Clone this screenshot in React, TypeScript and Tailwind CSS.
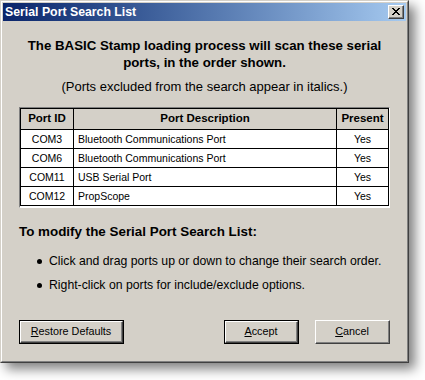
import React from "react";

const rows = [
  { id: "COM3", desc: "Bluetooth Communications Port", present: "Yes" },
  { id: "COM6", desc: "Bluetooth Communications Port", present: "Yes" },
  { id: "COM11", desc: "USB Serial Port", present: "Yes" },
  { id: "COM12", desc: "PropScope", present: "Yes" },
];

function Btn({ children, isDefault }: { children: React.ReactNode; isDefault?: boolean }) {
  return (
    <div className={isDefault ? "h-[24px] border border-black flex" : "h-[24px] flex"}>
      <div className="flex-1 flex border border-t-white border-l-white border-b-[#404040] border-r-[#404040]">
        <div className="flex-1 flex items-center justify-center border-b border-r border-b-[#808080] border-r-[#808080] text-[10.8px] text-black">
          {children}
        </div>
      </div>
    </div>
  );
}

export default function App() {
  return (
    <div
      className="w-[425px] h-[380px] bg-white overflow-hidden"
      style={{ fontFamily: '"Liberation Sans", Arial, sans-serif' }}
    >
      <div className="w-[409px] h-[363px] flex flex-col border border-t-[#d4d0c8] border-l-[#d4d0c8] border-b-[#404040] border-r-[#404040] bg-[#d4d0c8] shadow-[6px_6px_11px_rgba(0,0,0,0.5)]">
        <div className="flex-1 flex flex-col border border-t-white border-l-white border-b-[#808080] border-r-[#808080] p-px">
          {/* Title bar */}
          <div className="h-[18px] flex items-center justify-between bg-linear-to-r from-[#0a246a] to-[#a6caf0] pl-[2px] pr-[2px]">
            <span className="text-white font-bold text-[12.3px] leading-none">
              Serial Port Search List
            </span>
            <div className="w-[16px] h-[14px] flex border border-t-white border-l-white border-b-[#404040] border-r-[#404040] bg-[#d4d0c8]">
              <div className="flex-1 flex items-center justify-center border-b border-r border-b-[#808080] border-r-[#808080]">
                <svg width="8" height="7" viewBox="0 0 8 7" shapeRendering="crispEdges">
                  <path d="M0 0h2v1h-2zM6 0h2v1h-2zM1 1h2v1h-2zM5 1h2v1h-2zM2 2h4v1h-4zM3 3h2v1h-2zM2 4h4v1h-4zM1 5h2v1h-2zM5 5h2v1h-2zM0 6h2v1h-2zM6 6h2v1h-2z" fill="#000" />
                </svg>
              </div>
            </div>
          </div>

          {/* Body */}
          <div className="flex-1 flex flex-col px-[16px] text-black">
            <div className="mt-[16px] text-center font-bold text-[13.25px] leading-[17px]">
              The BASIC Stamp loading process will scan these serial
              <br />
              ports, in the order shown.
            </div>
            <div className="mt-[8px] text-center text-[13px] leading-[15px]">
              (Ports excluded from the search appear in italics.)
            </div>

            <div className="mt-[13px] border border-t-[#808080] border-l-[#808080] border-b-white border-r-white">
              <div className="border-b border-b-white">
                <table className="w-full border-collapse text-[10.5px] leading-none">
                  <thead>
                    <tr className="h-[21px] bg-[#d4d0c8]">
                      <th className="border border-black w-[53px] font-bold text-[11.5px] text-center">Port ID</th>
                      <th className="border border-black font-bold text-[11.5px] text-center">Port Description</th>
                      <th className="border border-black w-[52px] font-bold text-[11.5px] text-center">Present</th>
                    </tr>
                  </thead>
                  <tbody>
                    {rows.map((r) => (
                      <tr key={r.id} className="h-[19px] bg-white">
                        <td className="border border-black text-center">{r.id}</td>
                        <td className="border border-black text-left pl-[4px]">{r.desc}</td>
                        <td className="border border-black text-center">{r.present}</td>
                      </tr>
                    ))}
                  </tbody>
                </table>
              </div>
            </div>

            <div className="mt-[16px] font-bold text-[13.4px] leading-[16px]">
              To modify the Serial Port Search List:
            </div>
            <div className="mt-[14px] flex flex-col gap-[9px] pl-[18px] text-[12.25px] leading-[15px]">
              <div className="flex items-center gap-[7px]">
                <span className="w-[5px] h-[5px] rounded-full bg-black inline-block" />
                <span>Click and drag ports up or down to change their search order.</span>
              </div>
              <div className="flex items-center gap-[7px]">
                <span className="w-[5px] h-[5px] rounded-full bg-black inline-block" />
                <span>Right-click on ports for include/exclude options.</span>
              </div>
            </div>

            <div className="mt-[27px] flex items-center">
              <div className="w-[105px]">
                <Btn isDefault>
                  <span><u>R</u>estore Defaults</span>
                </Btn>
              </div>
              <div className="flex-1" />
              <div className="w-[75px]">
                <Btn isDefault>
                  <span><u>A</u>ccept</span>
                </Btn>
              </div>
              <div className="w-[16px]" />
              <div className="w-[75px]">
                <Btn>
                  <span><u>C</u>ancel</span>
                </Btn>
              </div>
            </div>
          </div>
        </div>
      </div>
    </div>
  );
}
